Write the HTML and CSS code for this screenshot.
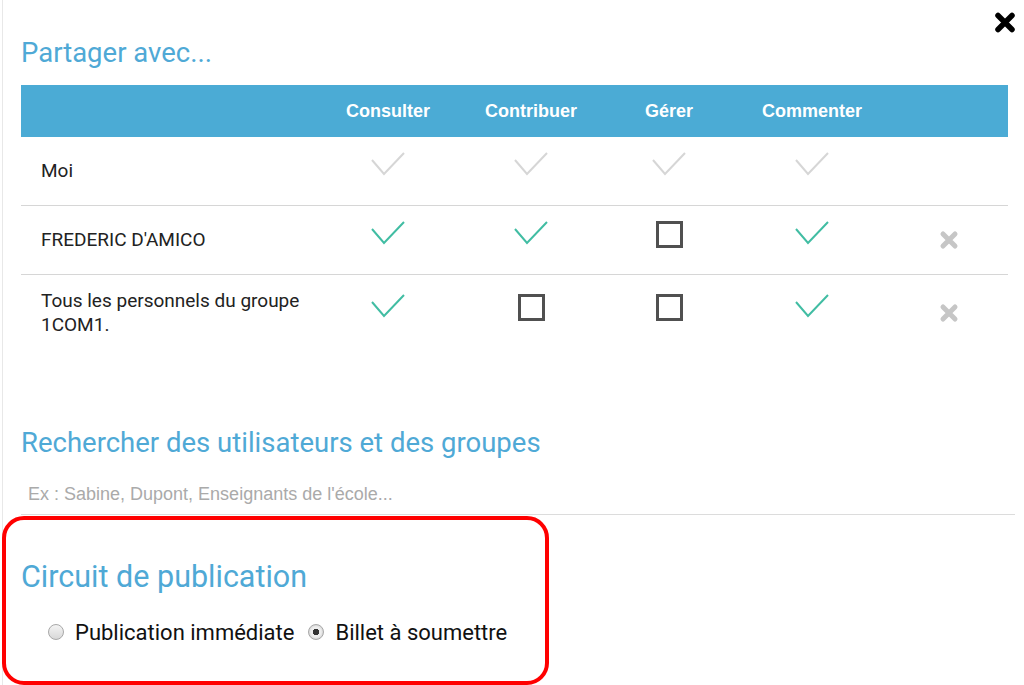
FILE: index.html
```html
<!DOCTYPE html>
<html lang="fr">
<head>
<meta charset="utf-8">
<title>Partager avec...</title>
<link rel="stylesheet" href="styles.css">
</head>
<body>
<div class="page">
  <button class="close" aria-label="Fermer">
    <svg width="22" height="21" viewBox="0 0 22 21"><path d="M4 3.5 L18 17.5 M18 3.5 L4 17.5" stroke="#000" stroke-width="5.5" stroke-linecap="round"/></svg>
  </button>

  <h1 class="title pad">Partager avec...</h1>

  <div class="share pad">
    <div class="row head">
      <div class="cell name"></div>
      <div class="cell">Consulter</div>
      <div class="cell">Contribuer</div>
      <div class="cell">Gérer</div>
      <div class="cell">Commenter</div>
      <div class="cell"></div>
    </div>

    <div class="row">
      <div class="cell name">Moi</div>
      <div class="cell"><svg class="chk off" viewBox="0 0 34 24"><polyline points="1,8 13,22 33,1"/></svg></div>
      <div class="cell"><svg class="chk off" viewBox="0 0 34 24"><polyline points="1,8 13,22 33,1"/></svg></div>
      <div class="cell"><svg class="chk off" viewBox="0 0 34 24"><polyline points="1,8 13,22 33,1"/></svg></div>
      <div class="cell"><svg class="chk off" viewBox="0 0 34 24"><polyline points="1,8 13,22 33,1"/></svg></div>
      <div class="cell"></div>
    </div>

    <div class="row">
      <div class="cell name">FREDERIC D'AMICO</div>
      <div class="cell"><svg class="chk" viewBox="0 0 34 24"><polyline points="1,8 13,22 33,1"/></svg></div>
      <div class="cell"><svg class="chk" viewBox="0 0 34 24"><polyline points="1,8 13,22 33,1"/></svg></div>
      <div class="cell"><span class="box"></span></div>
      <div class="cell"><svg class="chk" viewBox="0 0 34 24"><polyline points="1,8 13,22 33,1"/></svg></div>
      <div class="cell"><svg class="del" viewBox="0 0 20 20"><path d="M4 4 L16 16 M16 4 L4 16"/></svg></div>
    </div>

    <div class="row last">
      <div class="cell name">Tous les personnels du groupe<br>1COM1.</div>
      <div class="cell"><svg class="chk" viewBox="0 0 34 24"><polyline points="1,8 13,22 33,1"/></svg></div>
      <div class="cell"><span class="box"></span></div>
      <div class="cell"><span class="box"></span></div>
      <div class="cell"><svg class="chk" viewBox="0 0 34 24"><polyline points="1,8 13,22 33,1"/></svg></div>
      <div class="cell"><svg class="del" viewBox="0 0 20 20"><path d="M4 4 L16 16 M16 4 L4 16"/></svg></div>
    </div>
  </div>

  <h2 class="title search-title pad">Rechercher des utilisateurs et des groupes</h2>
  <input class="search pad" type="text" placeholder="Ex : Sabine, Dupont, Enseignants de l'école...">

  <section class="circuit">
    <h2 class="title circuit-title">Circuit de publication</h2>
    <div class="radios">
      <label class="opt"><input type="radio" name="circuit"> Publication immédiate</label>
      <label class="opt"><input type="radio" name="circuit" checked> Billet à soumettre</label>
    </div>
  </section>
</div>
</body>
</html>
```

FILE: styles.css
```css
* { box-sizing: border-box; }

html, body {
  margin: 0;
  padding: 0;
  background: #fff;
}

body {
  font-family: Roboto, "Liberation Sans", Arial, sans-serif;
  color: #222;
  height: 685px;
  overflow: hidden;
}

.page {
  position: relative;
  margin-left: 2px;
  border-left: 1px solid #e8e8e8;
  padding-top: 37px;
  min-height: 685px;
}

.pad { margin-left: 18px; }

.close {
  position: absolute;
  top: 12px;
  right: 8px;
  padding: 0;
  border: 0;
  background: none;
  line-height: 0;
}

.title {
  margin-top: 0;
  margin-bottom: 0;
  font-family: Roboto, "Liberation Sans", sans-serif;
  font-weight: 400;
  font-size: 27.5px;
  line-height: 32px;
  color: #4fa9d6;
}

.share {
  margin-top: 16px;
  width: 987px;
}

.row {
  display: grid;
  grid-template-columns: 297px 140px 146px 130px 156px 118px;
  min-height: 69px;
  border-bottom: 1px solid #d6d6d6;
}

.row.last { border-bottom: 0; min-height: 76px; }

.row.head {
  min-height: 52px;
  background: #4babd5;
  border-bottom: 0;
}

.cell {
  display: flex;
  align-items: center;
  justify-content: center;
  padding: 14px 0;
  font-size: 19px;
  line-height: 24px;
}

.cell.name {
  justify-content: flex-start;
  padding-left: 20px;
}

.head .cell {
  padding: 0;
  color: #fff;
  font-family: "Liberation Sans", Arial, sans-serif;
  font-weight: 700;
  font-size: 18px;
}

.chk {
  width: 34px;
  height: 24px;
  margin-top: -14px;
  fill: none;
  stroke: #41bda3;
  stroke-width: 2;
}

.chk.off { stroke: #d6d6d6; }

.box {
  display: block;
  width: 27px;
  height: 27px;
  margin-top: -12px;
  border: 3px solid #505050;
  background: #fff;
}

.del {
  width: 20px;
  height: 20px;
  fill: none;
  stroke: #c6c6c6;
  stroke-width: 5;
  stroke-linecap: round;
}

.search-title { margin-top: 76px; }

.search {
  display: block;
  width: 994px;
  height: 41px;
  margin-top: 15px;
  padding: 0 7px;
  border: 0;
  border-bottom: 1px solid #dcdcdc;
  outline: none;
  background: transparent;
  font-family: "Liberation Sans", Arial, sans-serif;
  font-size: 18px;
  color: #333;
}

.search::placeholder { color: #aaa; }

.circuit {
  width: 547px;
  margin-top: 1px;
  margin-left: -1px;
  padding: 39px 0 34px 15px;
  border: 4px solid #ff0000;
  border-radius: 22px;
}

.circuit-title {
  font-size: 30.5px;
  line-height: 36px;
}

.radios {
  display: flex;
  gap: 14px;
  margin-top: 24px;
  padding-left: 27px;
}

.opt {
  display: flex;
  align-items: center;
  gap: 11px;
  font-size: 22px;
  line-height: 28px;
  color: #111;
}

.opt input {
  appearance: none;
  -webkit-appearance: none;
  width: 16px;
  height: 16px;
  margin: 0;
  border: 1px solid #a8a8a8;
  border-radius: 50%;
  background: linear-gradient(#f4f4f4, #d8d8d8);
  position: relative;
  top: -1px;
}

.opt input:checked {
  background: radial-gradient(circle, #333 0 3px, #eee 3.5px 5px, #d8d8d8 7px);
}
```
